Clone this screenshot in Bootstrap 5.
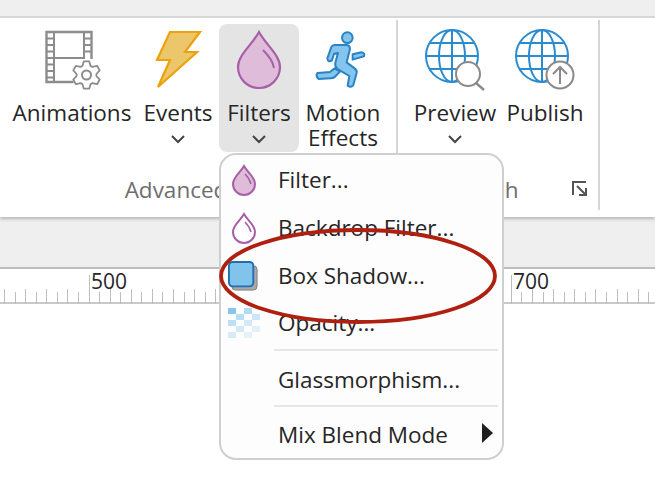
<!DOCTYPE html>
<html lang="en">
<head>
    <meta charset="UTF-8">
    <meta name="viewport" content="width=device-width, initial-scale=1.0">
    <title>Filters menu</title>
    <link href="https://cdn.jsdelivr.net/npm/bootstrap@5.3.0/dist/css/bootstrap.min.css" rel="stylesheet">
    <style>
      html, body {
          height: 100%;
      }
      body {
          background: #fff;
          overflow: hidden;
          font-family: "Open Sans", "Noto Sans", sans-serif;
          color: #262626;
      }
      .app-frame {
          position: relative;
          width: 655px;
          height: 486px;
      }
      .top-strip {
          height: 18px;
          background: #efefef;
          border-bottom: 2px solid #d8d8d8;
      }
      .ribbon {
          height: 199px;
          background: #fff;
          box-shadow: 0 2px 3px #b5b5b5;
          position: relative;
      }
      .ribbon-group {
          height: 190px;
          border-right: 2px solid #d6d6d6;
          margin-top: 2px;
          padding-top: 4px;
      }
      .group-advanced { width: 398px; }
      .group-publish { width: 202px; }
      .tool-btn {
          height: 128px;
          padding-top: 7px;
          border-radius: 8px;
          font-size: 22.5px;
          line-height: 25px;
          flex: none;
      }
      .tool-btn.active { background: #e4e4e4; }
      .tool-btn svg { display: block; height: 58px; margin-bottom: 11px; overflow: visible; }
      .tool-btn svg.tool-arrow { height: 14px; margin: 7px auto 0; }
      .w-animations { width: 126px; margin-left: 9px; }
      .w-events { width: 84px; padding-left: 2px; }
      .w-filters { width: 80px; }
      .w-motion { width: 90px; padding-right: 2px; }
      .w-preview { width: 90px; margin-left: 11px; padding-left: 2px; }
      .w-publish { width: 92px; }
      .group-label {
          font-size: 22.5px;
          line-height: 26px;
          color: #6e6e6e;
          margin-top: 25px;
      }
      .label-advanced { padding-right: 44px; }
      .label-publish { padding-right: 36px; }
      .launcher { position: absolute; right: 10px; bottom: 13px; }
      .gray-band {
          height: 51px;
          margin-top: 1px;
          background: #efefef;
          border-bottom: 2px solid #bdbdbd;
      }
      .ruler {
          position: relative;
          height: 35px;
          border-bottom: 2px solid #c9c9c9;
      }
      .ruler-num {
          position: absolute;
          top: -1px;
          font-size: 21px;
          line-height: 26px;
      }
      .num-500 { left: 91px; }
      .num-700 { left: 513px; }
      .ruler-ticks { position: absolute; left: 0; top: 0; }
      .pop-menu {
          position: absolute;
          left: 219px;
          top: 153px;
          width: 285px;
          height: 307px;
          padding-top: 1px;
          background: #fdfdfd;
          border: 2px solid #cfcfcf;
          border-radius: 17px;
      }
      .pop-row {
          height: 48px;
          font-size: 22.5px;
          position: relative;
      }
      .pop-row.short { height: 46px; margin-bottom: 3px; }
      .pop-row.glass { height: 54px; padding-top: 4px; }
      .pop-row.blend { height: 52px; padding-top: 4px; }
      .pop-icon { width: 57px; flex: none; padding-left: 7px; }
      .pop-icon svg { display: block; }
      .pop-icon svg.pop-drop { margin-left: 3px; }
      .pop-sep {
          height: 2px;
          background: #e6e6e6;
          margin: 0 4px 0 53px;
      }
      .sub-arrow {
          position: absolute;
          right: 9px;
          top: 16px;
          width: 0;
          height: 0;
          border-left: 11px solid #1f1f1f;
          border-top: 10px solid transparent;
          border-bottom: 10px solid transparent;
      }
      .highlight-ring { position: absolute; left: 0; top: 0; pointer-events: none; }
    </style>
</head>
<body>
    <div class="app-frame">
        <div class="top-strip"></div>
        <div class="ribbon d-flex">
            <div class="ribbon-group group-advanced d-flex flex-column">
                <div class="d-flex">
                    <div class="tool-btn w-animations text-center">
                        <svg class="mx-auto" width="64" height="58" viewBox="0 0 64 58" fill="none" stroke="#8c8c8c" stroke-width="2">
                            <g transform="translate(5.5 0)">
                                <path d="M28 51H1V1h45v27" stroke-width="2.4"/>
                                <path d="M8.500 1v50M38.500 1v27M8.500 27h30"/>
                                <path d="M1 7.500h7.500M1 14h7.500M1 20.500h7.500M1 27h7.500M1 33.500h7.500M1 40h7.500M1 46.500h7.500M38.500 7.500h7.500M38.500 14h7.500M38.500 20.500h7.500"/>
                                <path id="gearPath" stroke-width="1.8" stroke-linejoin="round"/>
                                <circle cx="41" cy="44" r="4.500"/>
                            </g>
                        </svg>
                        Animations
                    </div>
                    <div class="tool-btn w-events text-center">
                        <svg class="mx-auto" width="46" height="58" viewBox="0 0 46 58">
                            <path d="M15 1h30L30 21h12L3 56l12-27H2z" fill="#ecc66a" stroke="#eda20c" stroke-width="2.200"/>
                        </svg>
                        Events
                        <svg class="tool-arrow" width="14" height="14" viewBox="0 0 14 14" fill="none" stroke="#444" stroke-width="2"><path d="M1 4l6 6 6-6"/></svg>
                    </div>
                    <div class="tool-btn w-filters active text-center">
                        <svg class="mx-auto" width="46" height="58" viewBox="0 0 46 58">
                            <path d="M23 1C16 14 2 24 2 36a21 21 0 0 0 42 0C44 24 30 14 23 1z" fill="#dfbcd9" stroke="#a75fa8" stroke-width="2.200"/>
                            <path d="M27 19c5 5 10 11 11 18" fill="none" stroke="#a75fa8" stroke-width="2"/>
                        </svg>
                        Filters
                        <svg class="tool-arrow" width="14" height="14" viewBox="0 0 14 14" fill="none" stroke="#444" stroke-width="2"><path d="M1 4l6 6 6-6"/></svg>
                    </div>
                    <div class="tool-btn w-motion text-center">
                        <svg class="mx-auto" width="52" height="58" viewBox="0 0 52 58">
                            <g transform="translate(-13 -10) scale(.3333)" fill="#85c4ec" stroke="#2a83c4" stroke-width="6" stroke-linejoin="round">
                                <circle cx="130" cy="50" r="16"/>
                                <path d="M146 100L172 94Q184 96 180 106L146 116Z"/>
                                <path d="M40 156L78 153L92 142L108 152L92 168Q88 172 80 172L44 174Q34 166 40 156Z"/>
                                <path d="M70 112L82 78Q85 72 92 72H128Q138 73 138 84L128 124L152 142Q160 148 158 156L148 192Q142 202 131 194L136 165L102 145Q92 138 94 125L102 96L90 98L84 118Q72 126 70 112Z"/>
                            </g>
                        </svg>
                        Motion<br>Effects
                    </div>
                </div>
                <div class="group-label label-advanced text-center">Advanced</div>
            </div>
            <div class="ribbon-group group-publish d-flex flex-column position-relative">
                <div class="d-flex">
                    <div class="tool-btn w-preview text-center">
                        <svg class="mx-auto" width="62" height="58" viewBox="0 0 62 58" fill="none">
                            <g transform="translate(-1 0)">
                                <g stroke="#2a8ccf" stroke-width="2">
                                    <circle cx="29" cy="25" r="26"/>
                                    <ellipse cx="29" cy="25" rx="13" ry="26"/>
                                    <path d="M29 -1v52M3 25h52M7 12h44M7 38h44"/>
                                </g>
                                <circle cx="45" cy="43" r="12" fill="#fff" stroke="#8a8a8a" stroke-width="2"/>
                                <path d="M53 52l8 7" stroke="#8a8a8a" stroke-width="2.400"/>
                            </g>
                        </svg>
                        Preview
                        <svg class="tool-arrow" width="14" height="14" viewBox="0 0 14 14" fill="none" stroke="#444" stroke-width="2"><path d="M1 4l6 6 6-6"/></svg>
                    </div>
                    <div class="tool-btn w-publish text-center">
                        <svg class="mx-auto" width="62" height="58" viewBox="0 0 62 58" fill="none">
                            <g stroke="#2a8ccf" stroke-width="2">
                                <circle cx="28" cy="25" r="26"/>
                                <ellipse cx="28" cy="25" rx="13" ry="26"/>
                                <path d="M28 -1v52M2 25h52M6 12h44M6 38h44"/>
                            </g>
                            <circle cx="46" cy="44" r="13.500" fill="#fff" stroke="#8a8a8a" stroke-width="2"/>
                            <path d="M46 53V36M39 43l7-7 7 7" stroke="#8a8a8a" stroke-width="2"/>
                        </svg>
                        Publish
                    </div>
                </div>
                <div class="group-label label-publish text-center">Publish</div>
                <svg class="launcher" width="16" height="16" viewBox="0 0 16 16" fill="none" stroke="#555" stroke-width="2"><path d="M14 1H1v13"/><path d="M5 5l8 8M14 7v7H7"/></svg>
            </div>
        </div>
        <div class="gray-band"></div>
        <div class="ruler">
            <svg class="ruler-ticks" id="rulerTicks" width="655" height="35"></svg>
            <span class="ruler-num num-500">500</span>
            <span class="ruler-num num-700">700</span>
        </div>

        <div class="pop-menu">
            <div class="pop-row d-flex align-items-center">
                <span class="pop-icon"><svg class="pop-drop" width="26" height="32" viewBox="0 0 26 32"><path d="M13 2C9 9 2 13 2 20a11 11 0 0 0 22 0C24 13 17 9 13 2z" fill="#dfbcd9" stroke="#a75fa8" stroke-width="2"/><path d="M14 10c3 3 5 6 6 10" fill="none" stroke="#a75fa8" stroke-width="1.500"/></svg></span>
                <span>Filter...</span>
            </div>
            <div class="pop-row d-flex align-items-center">
                <span class="pop-icon"><svg class="pop-drop" width="26" height="32" viewBox="0 0 26 32"><path d="M13 2C9 9 2 13 2 20a11 11 0 0 0 22 0C24 13 17 9 13 2z" fill="#fff" stroke="#a75fa8" stroke-width="2"/><path d="M14 10c3 3 5 6 6 10" fill="none" stroke="#a75fa8" stroke-width="1.500"/></svg></span>
                <span>Backdrop Filter...</span>
            </div>
            <div class="pop-row d-flex align-items-center">
                <span class="pop-icon"><svg width="30" height="30" viewBox="0 0 32 32"><rect x="4" y="5" width="27" height="26" rx="4" fill="#a9a9a9" stroke="#7d7d7d"/><rect x="1" y="1" width="26" height="26" rx="4" fill="#80c4ec" stroke="#1f6fb0" stroke-width="2"/></svg></span>
                <span>Box Shadow...</span>
            </div>
            <div class="pop-row short d-flex align-items-center">
                <span class="pop-icon"><svg width="32" height="30" viewBox="0 0 32 30" id="opacityIcon"></svg></span>
                <span>Opacity...</span>
            </div>
            <div class="pop-sep"></div>
            <div class="pop-row glass d-flex align-items-center">
                <span class="pop-icon"></span>
                <span>Glassmorphism...</span>
            </div>
            <div class="pop-sep"></div>
            <div class="pop-row blend d-flex align-items-center">
                <span class="pop-icon"></span>
                <span>Mix Blend Mode</span>
                <span class="sub-arrow"></span>
            </div>
        </div>

        <svg class="highlight-ring" width="655" height="486" viewBox="0 0 655 486" fill="none">
            <ellipse cx="358" cy="276" rx="137" ry="46" stroke="#b02010" stroke-width="3.800"/>
        </svg>
    </div>

    <script>
        // ruler ticks: one every 5 units, 2.112px per unit, 500 sits at x=88
        const rulerTicks = document.getElementById('rulerTicks');
        let tickSvg = '';
        for (let i = -8; i < 56; i++) {
            const x = Math.round(88.5 + i * 10.56) + 0.5;
            const isMajor = i % 40 === 0;
            const y1 = isMajor ? 6 : (i % 2 === 0 ? 20 : 23);
            tickSvg += `<line x1="${x}" x2="${x}" y1="${y1}" y2="35" stroke="#bdbdbd"/>`;
        }
        rulerTicks.innerHTML = tickSvg;

        // opacity icon: checker squares fading downward
        const opacityIcon = document.getElementById('opacityIcon');
        const cells = [[0,0,.95],[2,0,.6],[1,1,.55],[3,1,.4],[0,2,.5],[2,2,.35],[1,3,.35],[3,3,.22],[0,4,.3],[2,4,.2]];
        let cellSvg = '';
        cells.forEach(c => {
            cellSvg += `<rect x="${c[0] * 8}" y="${c[1] * 6}" width="8" height="6" fill="#80c4ec" opacity="${c[2]}"/>`;
        });
        opacityIcon.innerHTML = cellSvg;

        // gear on the animations icon, 6 teeth
        const gearPts = [];
        for (let t = 0; t < 6; t++) {
            const a = (t * 60 - 90) * Math.PI / 180;
            [[-24, 10], [-11, 14], [11, 14], [24, 10]].forEach(p => {
                const b = a + p[0] * Math.PI / 180;
                gearPts.push((41 + p[1] * Math.cos(b)).toFixed(1) + ' ' + (44 + p[1] * Math.sin(b)).toFixed(1));
            });
        }
        document.getElementById('gearPath').setAttribute('d', 'M' + gearPts.join('L') + 'Z');
    </script>
</body>
</html>
